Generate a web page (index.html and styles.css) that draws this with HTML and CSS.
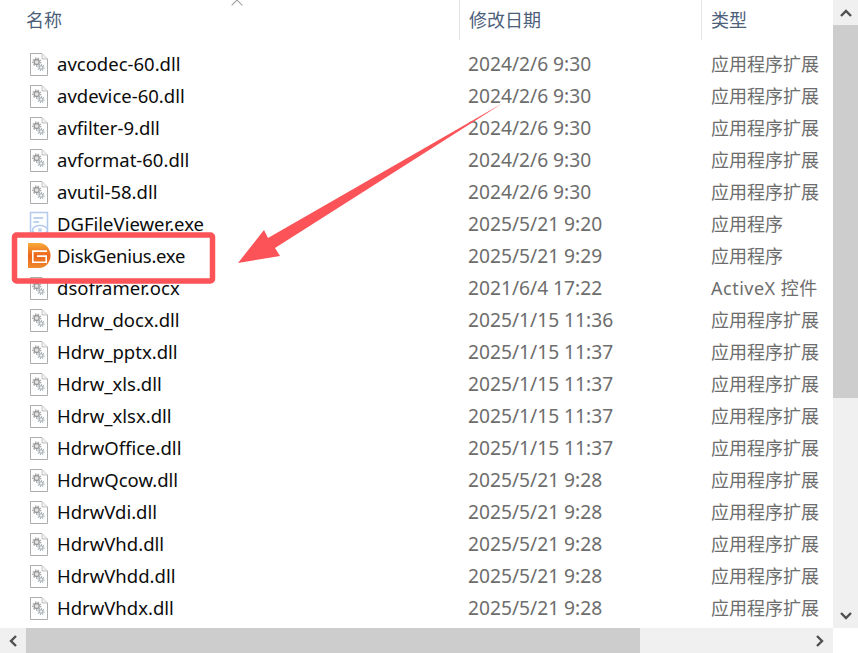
FILE: index.html
```html
<!DOCTYPE html>
<html>
	<head>
		<meta charset="utf-8">
		<title>文件列表</title>
		<link rel="stylesheet" href="styles.css">
	</head>
	<body>
		<svg class="icon-defs" width="0" height="0">
			<defs>
				<linearGradient id="geniusFill" x1="0" y1="0" x2="0" y2="1">
					<stop offset="0" stop-color="#f9ab3c"/>
					<stop offset=".5" stop-color="#ec661c"/>
					<stop offset="1" stop-color="#ee8a2c"/>
				</linearGradient>
				<symbol id="dll" viewBox="0 0 22 24" overflow="visible">
					<path d="M2.500 1.500H14L19.500 7V23.500H2.500Z" fill="#fff" stroke="#acacac"/>
					<path d="M14 1.500V7H19.500" fill="#f0f0f0" stroke="#c4c4c4"/>
					<circle cx="8.700" cy="10" r="3.900" fill="none" stroke="#aaa" stroke-width="1.500" stroke-dasharray="1.400 1.300"/>
					<circle cx="8.700" cy="10" r="2.500" fill="#e4e4e4" stroke="#999" stroke-width="1.300"/>
					<circle cx="13" cy="15.500" r="3" fill="none" stroke="#a9b2b8" stroke-width="1.300" stroke-dasharray="1.200 1.100"/>
					<circle cx="13" cy="15.500" r="1.800" fill="#eef1f2" stroke="#9aa5ac" stroke-width="1"/>
				</symbol>
				<symbol id="viewer" viewBox="0 0 22 24" overflow="visible">
					<path d="M2.500 .5H19.500V20H2.500Z" fill="#fbfdff" stroke="#b4cbee" stroke-width="1.500"/>
					<path d="M5.500 6H15M5.500 10H11" stroke="#a9c3ea" stroke-width="1.500" fill="none"/>
					<ellipse cx="12" cy="18" rx="7.500" ry="4.500" fill="#fff" stroke="#b4cbee" stroke-width="1.500"/>
					<circle cx="12" cy="18" r="2" fill="#c2d5f0"/>
				</symbol>
				<symbol id="genius" viewBox="0 0 22 24" overflow="visible">
					<path d="M0 -1H11C18 -1 22.500 5 22.500 11.500C22.500 18 18 24 11 24H0Z" fill="url(#geniusFill)"/>
					<path d="M4 6.300H19V7.900H5.600V17.400H17.400V12.900H9V11.300H19V19H4Z" fill="#fff"/>
				</symbol>
			</defs>
		</svg>

		<div class="explorer">
			<div class="file-pane">
				<div class="list-head">
					<div class="head-cell head-name">名称<span class="sort-caret"></span></div>
					<div class="head-cell head-date">修改日期</div>
					<div class="head-cell head-type">类型</div>
				</div>
				<div class="file-list">
					<div class="file-row"><span class="file-name"><svg class="file-icon"><use href="#dll"/></svg>avcodec-60.dll</span><span class="file-date">2024/2/6 9:30</span><span class="file-type">应用程序扩展</span></div>
					<div class="file-row"><span class="file-name"><svg class="file-icon"><use href="#dll"/></svg>avdevice-60.dll</span><span class="file-date">2024/2/6 9:30</span><span class="file-type">应用程序扩展</span></div>
					<div class="file-row"><span class="file-name"><svg class="file-icon"><use href="#dll"/></svg>avfilter-9.dll</span><span class="file-date">2024/2/6 9:30</span><span class="file-type">应用程序扩展</span></div>
					<div class="file-row"><span class="file-name"><svg class="file-icon"><use href="#dll"/></svg>avformat-60.dll</span><span class="file-date">2024/2/6 9:30</span><span class="file-type">应用程序扩展</span></div>
					<div class="file-row"><span class="file-name"><svg class="file-icon"><use href="#dll"/></svg>avutil-58.dll</span><span class="file-date">2024/2/6 9:30</span><span class="file-type">应用程序扩展</span></div>
					<div class="file-row"><span class="file-name"><svg class="file-icon"><use href="#viewer"/></svg>DGFileViewer.exe</span><span class="file-date">2025/5/21 9:20</span><span class="file-type">应用程序</span></div>
					<div class="file-row"><span class="file-name file-name-tight"><svg class="file-icon"><use href="#genius"/></svg>DiskGenius.exe</span><span class="file-date">2025/5/21 9:29</span><span class="file-type">应用程序</span></div>
					<div class="file-row"><span class="file-name"><svg class="file-icon"><use href="#dll"/></svg>dsoframer.ocx</span><span class="file-date">2021/6/4 17:22</span><span class="file-type file-type-latin">ActiveX 控件</span></div>
					<div class="file-row"><span class="file-name"><svg class="file-icon"><use href="#dll"/></svg>Hdrw_docx.dll</span><span class="file-date">2025/1/15 11:36</span><span class="file-type">应用程序扩展</span></div>
					<div class="file-row"><span class="file-name"><svg class="file-icon"><use href="#dll"/></svg>Hdrw_pptx.dll</span><span class="file-date">2025/1/15 11:37</span><span class="file-type">应用程序扩展</span></div>
					<div class="file-row"><span class="file-name"><svg class="file-icon"><use href="#dll"/></svg>Hdrw_xls.dll</span><span class="file-date">2025/1/15 11:37</span><span class="file-type">应用程序扩展</span></div>
					<div class="file-row"><span class="file-name"><svg class="file-icon"><use href="#dll"/></svg>Hdrw_xlsx.dll</span><span class="file-date">2025/1/15 11:37</span><span class="file-type">应用程序扩展</span></div>
					<div class="file-row"><span class="file-name"><svg class="file-icon"><use href="#dll"/></svg>HdrwOffice.dll</span><span class="file-date">2025/1/15 11:37</span><span class="file-type">应用程序扩展</span></div>
					<div class="file-row"><span class="file-name"><svg class="file-icon"><use href="#dll"/></svg>HdrwQcow.dll</span><span class="file-date">2025/5/21 9:28</span><span class="file-type">应用程序扩展</span></div>
					<div class="file-row"><span class="file-name"><svg class="file-icon"><use href="#dll"/></svg>HdrwVdi.dll</span><span class="file-date">2025/5/21 9:28</span><span class="file-type">应用程序扩展</span></div>
					<div class="file-row"><span class="file-name"><svg class="file-icon"><use href="#dll"/></svg>HdrwVhd.dll</span><span class="file-date">2025/5/21 9:28</span><span class="file-type">应用程序扩展</span></div>
					<div class="file-row"><span class="file-name"><svg class="file-icon"><use href="#dll"/></svg>HdrwVhdd.dll</span><span class="file-date">2025/5/21 9:28</span><span class="file-type">应用程序扩展</span></div>
					<div class="file-row"><span class="file-name"><svg class="file-icon"><use href="#dll"/></svg>HdrwVhdx.dll</span><span class="file-date">2025/5/21 9:28</span><span class="file-type">应用程序扩展</span></div>
				</div>
			</div>

			<div class="scroll-v">
				<div class="scroll-btn">
					<svg class="scroll-arrow" viewBox="0 0 12 8"><path d="M1 7L6 2L11 7" fill="none" stroke="#505050" stroke-width="2.400"/></svg>
				</div>
				<div class="scroll-v-thumb"></div>
				<div class="scroll-v-track"></div>
				<div class="scroll-btn">
					<svg class="scroll-arrow" viewBox="0 0 12 8"><path d="M1 1L6 6L11 1" fill="none" stroke="#505050" stroke-width="2.400"/></svg>
				</div>
			</div>

			<div class="scroll-h">
				<div class="scroll-btn">
					<svg class="scroll-arrow-h" viewBox="0 0 8 12"><path d="M7 1L2 6L7 11" fill="none" stroke="#505050" stroke-width="2.400"/></svg>
				</div>
				<div class="scroll-h-thumb"></div>
				<div class="scroll-h-track"></div>
				<div class="scroll-btn">
					<svg class="scroll-arrow-h" viewBox="0 0 8 12"><path d="M1 1L6 6L1 11" fill="none" stroke="#505050" stroke-width="2.400"/></svg>
				</div>
			</div>
			<div class="scroll-corner"></div>
		</div>

		<!-- red marks drawn on top of the window -->
		<svg class="markup" viewBox="0 0 858 653">
			<rect x="14.500" y="235" width="198" height="46" rx="2" fill="none" stroke="#fb5357" stroke-width="5.500"/>
			<path d="M503 103L268 238L264 230L238 263L280 256L275 248Z" fill="#fb5357"/>
		</svg>
	</body>
</html>
```

FILE: styles.css
```css
html, body {
	margin: 0;
	padding: 0;
	background: #fff;
}

body {
	font-family: "Noto Sans", "Noto Sans CJK SC", sans-serif;
	font-size: 18px;
	position: relative;
	width: 858px;
	height: 653px;
	overflow: hidden;
}

.icon-defs {
	position: absolute;
}

.explorer {
	display: grid;
	grid-template-columns: 833px 25px;
	grid-template-rows: 628px 25px;
	width: 858px;
	height: 653px;
}

.file-pane {
	overflow: hidden;
}

.list-head {
	display: grid;
	grid-template-columns: 459px 242px 132px;
	height: 40px;
	margin-bottom: 8px;
	color: #4c607a;
}

.head-cell {
	position: relative;
	display: flex;
	align-items: center;
	padding-left: 9px;
	padding-bottom: 2px;
	box-sizing: border-box;
	border-left: 1px solid #e5e5e5;
}

.head-name {
	border-left: none;
	padding-left: 26px;
}

.sort-caret {
	position: absolute;
	left: 233px;
	top: 1px;
	width: 7px;
	height: 7px;
	border-left: 1px solid #999;
	border-top: 1px solid #999;
	transform: rotate(45deg);
}

.file-row {
	display: grid;
	grid-template-columns: 468px 243px 122px;
	box-sizing: border-box;
	height: 32px;
	padding-bottom: 2px;
	align-items: center;
	white-space: nowrap;
}

.file-name {
	display: flex;
	align-items: center;
	color: #0c0c0c;
	font-size: 18.5px;
}

.file-name-tight {
	letter-spacing: -0.3px;
}

.file-icon {
	width: 22px;
	height: 24px;
	margin-top: 2px;
	margin-left: 28px;
	margin-right: 7px;
	flex: none;
	overflow: visible;
}

.file-date {
	color: #6d6d6d;
	font-size: 19.2px;
}

.file-type {
	color: #6d6d6d;
}

.file-type-latin {
	letter-spacing: 0.5px;
}

.scroll-v {
	display: flex;
	flex-direction: column;
}

.scroll-btn {
	flex: none;
	width: 25px;
	height: 25px;
	display: flex;
	align-items: center;
	justify-content: center;
	background: #f0f0f0;
}

.scroll-arrow {
	width: 12px;
	height: 8px;
}

.scroll-arrow-h {
	width: 8px;
	height: 12px;
}

.scroll-v-thumb {
	height: 373px;
	background: #cdcdcd;
}

.scroll-v-track,
.scroll-h-track {
	flex: 1;
	background: #f0f0f0;
}

.scroll-h {
	display: flex;
}

.scroll-h .scroll-btn {
	width: 26px;
}

.scroll-h-thumb {
	width: 614px;
	background: #cdcdcd;
}

.scroll-corner {
	background: #fff;
}

.markup {
	position: absolute;
	left: 0;
	top: 0;
	width: 858px;
	height: 653px;
	pointer-events: none;
}
```
